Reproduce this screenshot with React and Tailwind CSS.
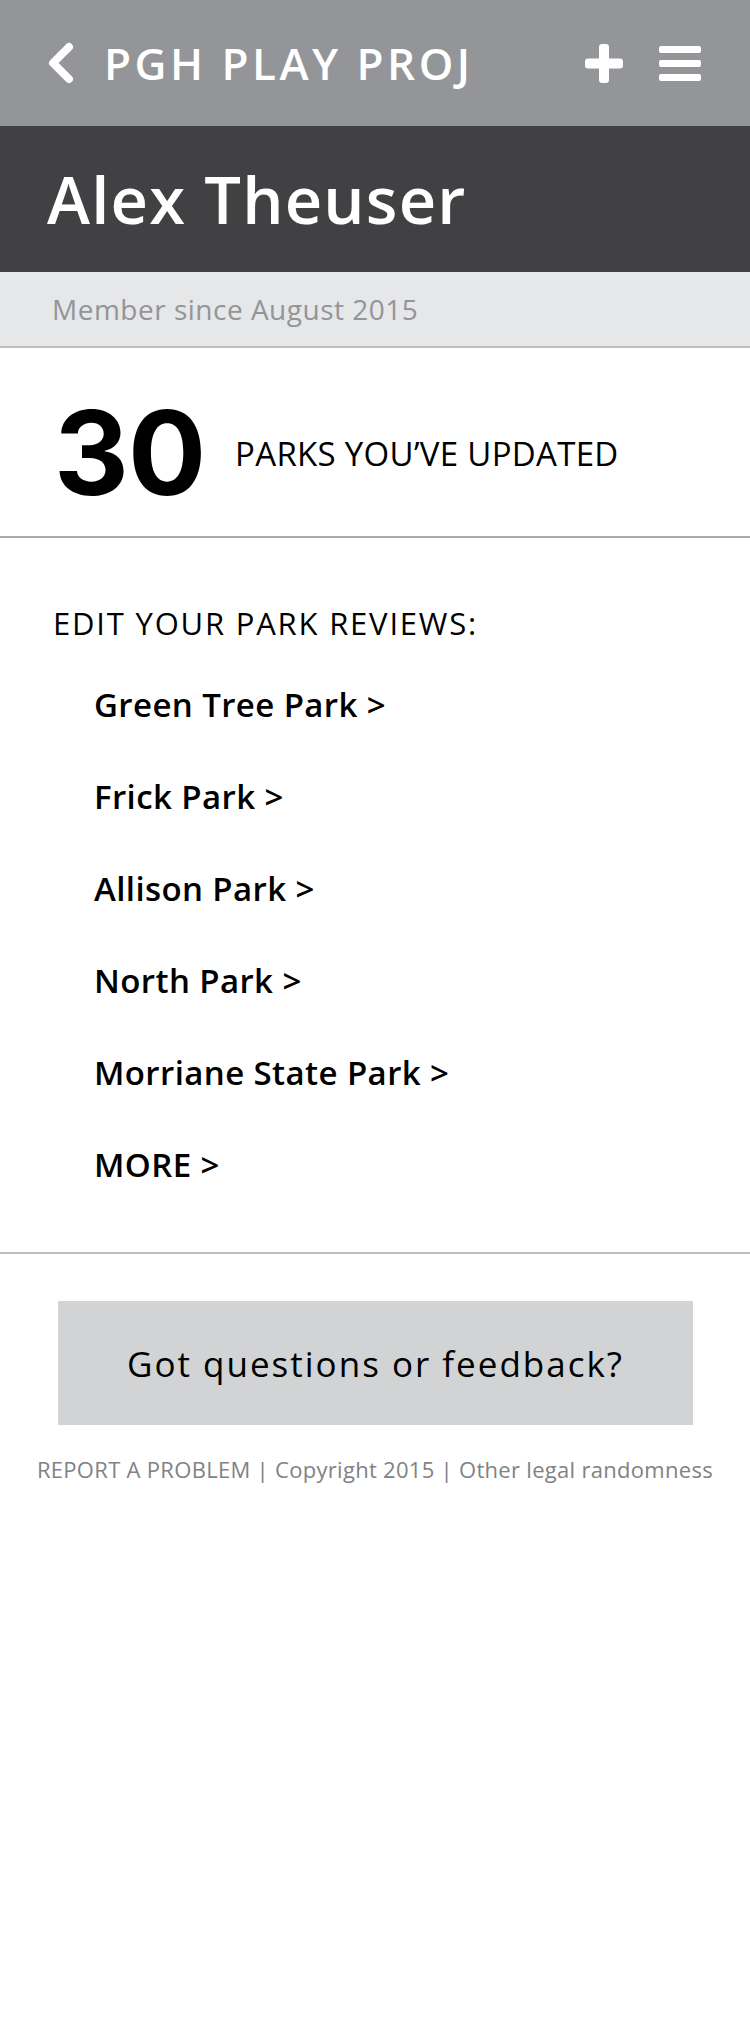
const parks = [
  "Green Tree Park",
  "Frick Park",
  "Allison Park",
  "North Park",
  "Morriane State Park",
  "MORE",
];

const App = () => {
  return (
    <div className="w-[750px] min-h-[2019px] bg-white font-['Open_Sans',sans-serif] text-black">
      {/* top bar */}
      <div className="h-[126px] bg-[#939598] flex items-center pl-[46px] pr-[49px]">
        <svg width="28" height="42" viewBox="0 0 28 42" className="shrink-0">
          <path d="M23 5 L7 21 L23 37" fill="none" stroke="white" strokeWidth="8" strokeLinecap="round" strokeLinejoin="round" />
        </svg>
        <h1 className="ml-[30px] text-[44px] font-semibold tracking-[3.5px] text-white leading-none">PGH PLAY PROJ</h1>
        <div className="ml-auto flex items-center gap-[36px]">
          <svg width="38" height="39" viewBox="0 0 38 39">
            <rect x="14" y="0" width="10" height="39" rx="3" fill="white" />
            <rect x="0" y="14.5" width="38" height="10" rx="3" fill="white" />
          </svg>
          <svg width="42" height="35" viewBox="0 0 42 35">
            <rect x="0" y="0" width="42" height="7" rx="2" fill="white" />
            <rect x="0" y="14" width="42" height="7" rx="2" fill="white" />
            <rect x="0" y="28" width="42" height="7" rx="2" fill="white" />
          </svg>
        </div>
      </div>

      {/* name */}
      <div className="h-[146px] bg-[#414042] flex items-center px-[47px]">
        <h2 className="text-[65px] font-semibold tracking-[1.2px] text-white leading-none">Alex Theuser</h2>
      </div>

      <div className="h-[76px] bg-[#e6e7e8] border-b-2 border-[#bcbec0] flex items-center px-[52px]">
        <p className="text-[28px] tracking-[0.5px] text-[#939598] leading-none">Member since August 2015</p>
      </div>

      {/* stats */}
      <div className="h-[190px] border-b-2 border-[#a7a9ac] flex items-center pt-[16px] px-[54px]">
        <span className="mt-[6px] font-['Inter',sans-serif] text-[116px] font-bold leading-none tracking-[-1px]">30</span>
        <span className="ml-[30px] mt-[6px] text-[33px] tracking-[0.3px] leading-none">PARKS YOU’VE UPDATED</span>
      </div>

      {/* reviews */}
      <div className="border-b-2 border-[#bcbec0] pt-[70px] pb-[42px]">
        <h3 className="px-[53px] text-[31px] tracking-[1.8px] leading-none">EDIT YOUR PARK REVIEWS:</h3>
        <ul className="mt-[19px] pl-[94px]">
          {parks.map((park) => (
            <li key={park} className="h-[92px] flex items-center text-[33px] font-semibold tracking-[0.4px] leading-none">
              {park} &gt;
            </li>
          ))}
        </ul>
      </div>

      {/* feedback */}
      <div className="pt-[47px] px-[58px]">
        <button className="w-[635px] h-[124px] bg-[#d1d3d4] text-[35px] tracking-[2px] leading-none text-black">
          Got questions or feedback?
        </button>
      </div>
      <p className="mt-[33px] text-center text-[22px] tracking-[0.3px] text-[#808285] leading-none">
        REPORT A PROBLEM | Copyright 2015 | Other legal randomness
      </p>
    </div>
  );
};

export default App;
